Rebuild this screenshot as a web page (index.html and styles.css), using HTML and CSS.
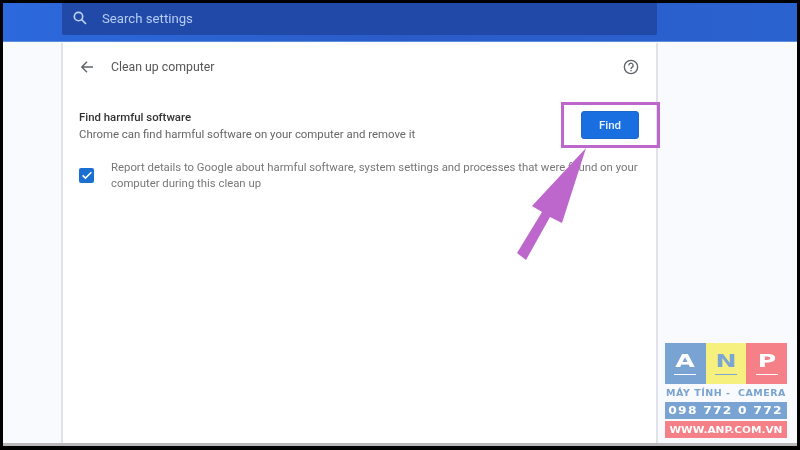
FILE: index.html
```html
<!DOCTYPE html>
<html lang="en">
<head>
  <meta charset="UTF-8" />
  <title>Clean up computer</title>
  <link rel="stylesheet" href="styles.css">
</head>
<body>
  <div class="screen">
    <header class="topbar">
      <div class="search">
        <svg class="search-icon" viewBox="0 0 24 24" width="18" height="18"><circle cx="10" cy="10" r="5.6" fill="none" stroke="currentColor" stroke-width="2.2"/><path d="M14.2 14.2 20 20" stroke="currentColor" stroke-width="2.2" fill="none"/></svg>
        <span>Search settings</span>
      </div>
    </header>

    <main class="content">
      <section class="card">
        <div class="card-head">
          <svg class="back" viewBox="0 0 24 24" width="18" height="18"><path d="M20 12H5M12 5l-7 7 7 7" fill="none" stroke="#5f6368" stroke-width="1.8"/></svg>
          <h1>Clean up computer</h1>
          <svg class="help" viewBox="0 0 24 24" width="16" height="16"><circle cx="12" cy="12" r="10" fill="none" stroke="#5f6368" stroke-width="2"/><path d="M8.8 9.6a3.2 3.2 0 1 1 5 2.6c-1.2.9-1.8 1.4-1.8 2.8" fill="none" stroke="#5f6368" stroke-width="2"/><rect x="11" y="16.4" width="2" height="2" fill="#5f6368"/></svg>
        </div>

        <div class="find-row">
          <div class="find-text">
            <h2>Find harmful software</h2>
            <p>Chrome can find harmful software on your computer and remove it</p>
          </div>
          <div class="find-action">
            <button class="find-btn">Find</button>
          </div>
        </div>

        <div class="report-row">
          <span class="checkbox">
            <svg viewBox="0 0 16 16" width="14" height="14"><path d="M3 8.4l3.2 3.2L13 4.8" fill="none" stroke="#fff" stroke-width="1.7"/></svg>
          </span>
          <p>Report details to Google about harmful software, system settings and processes that were found on your computer during this clean up</p>
        </div>
      </section>

      <aside class="side">
        <div class="logo">
          <div class="tiles">
            <span class="tile tile-a"><b><i>A</i></b></span>
            <span class="tile tile-n"><b><i>N</i></b></span>
            <span class="tile tile-p"><b><i>P</i></b></span>
          </div>
          <div class="logo-caption">MÁY TÍNH -&nbsp; CAMERA</div>
          <div class="logo-phone"><span>098 772 0 772</span></div>
          <div class="logo-web"><span>WWW.ANP.COM.VN</span></div>
        </div>
      </aside>
    </main>

    <!-- annotation drawn over the screenshot -->
    <div class="highlight"></div>
    <svg class="arrow" viewBox="0 0 800 450" width="800" height="450"><polygon points="586,148 532,206 542,212 517,253 526,260 550,217 562,223" fill="#bd67cd"/></svg>
  </div>
</body>
</html>
```

FILE: styles.css
```css
* {
  box-sizing: border-box;
}

html, body {
  margin: 0;
  height: 100%;
}

body {
  background: #000;
  padding: 3px 3px 4px;
  font-family: Roboto, 'Liberation Sans', sans-serif;
  overflow: hidden;
}

/* the filter makes this the containing block of the annotation */
.screen {
  height: 443px;
  display: flex;
  flex-direction: column;
  background: #f8fafe;
  border-bottom: 3px solid #b9b7ba;
  filter: blur(0.35px);
}

.topbar {
  height: 39px;
  flex: none;
  padding-left: 59px;
  padding-right: 140px;
  background: linear-gradient(90deg, #2c69dc, #2a5cc8 50%, #2a62d0);
  border-bottom: 1px solid #5b8fdc;
}

.search {
  height: 32px;
  display: flex;
  align-items: center;
  padding: 0 0 2px 9px;
  gap: 13px;
  background: #2149a8;
  border-radius: 0 0 2px 2px;
  color: #b5cdf3;
  font-size: 13.2px;
}

.search-icon {
  color: #bcd2f5;
}

.content {
  flex: 1;
  display: flex;
  padding-left: 58px;
  padding-top: 1px;
}

.card {
  width: 597px;
  flex: none;
  background: #fff;
  border-left: 2px solid #dfe2e8;
  border-right: 2px solid #dfe2e8;
  padding: 0 17px 0 16px;
}

.card-head {
  height: 47px;
  display: flex;
  align-items: center;
}

.back {
  margin-left: -1px;
  margin-right: 15px;
}

.card-head h1 {
  margin: 0;
  flex: 1;
  font-size: 12.3px;
  font-weight: 400;
  color: #555;
}

.find-row {
  display: flex;
  justify-content: space-between;
  margin-top: 20px;
}

.find-text h2 {
  margin: 0 0 2px;
  font-size: 11.4px;
  line-height: 15px;
  font-weight: 500;
  color: #333;
}

.find-text p {
  margin: 0;
  font-size: 11.4px;
  line-height: 15px;
  color: #666;
}

.find-action {
  margin-top: 1px;
}

.find-btn {
  display: block;
  width: 58px;
  height: 28px;
  border: 1px solid #1c67c8;
  border-radius: 3px;
  background: #1a6fe0;
  color: #e8f1ff;
  font: 500 11.5px Roboto, 'Liberation Sans', sans-serif;
}

.report-row {
  display: flex;
  align-items: center;
  gap: 17px;
  margin-top: 17px;
  margin-right: -4px;
}

.checkbox {
  width: 15px;
  height: 15px;
  flex: none;
  display: flex;
  align-items: center;
  justify-content: center;
  background: #1a6fd0;
  border-radius: 2px;
}

.report-row p {
  margin: 0;
  font-size: 11.35px;
  line-height: 16px;
  color: #777;
}

.side {
  flex: 1;
  display: flex;
  align-items: flex-end;
  padding-left: 7px;
  padding-bottom: 5px;
}

.logo {
  width: 122px;
  font-family: 'DejaVu Sans', sans-serif;
  font-weight: 700;
  text-align: center;
}

.tiles {
  display: flex;
  height: 41px;
}

.tile {
  flex: 1;
  display: flex;
  align-items: center;
  justify-content: center;
  color: #fff;
}

.tile b {
  display: block;
  width: 22px;
  padding-bottom: 5px;
  border-bottom: 1px solid currentColor;
  font-size: 18px;
  line-height: 16px;
}

.tile i {
  display: block;
  font-style: normal;
  transform: scaleX(1.4);
}

.tile-a {
  background: #78a3d2;
}

.tile-n {
  background: #f6f07e;
  color: #7ba6d4;
}

.tile-p {
  background: #f58088;
}

.logo-caption {
  height: 18px;
  line-height: 18px;
  font-size: 9.5px;
  letter-spacing: 0.5px;
  color: #7ba3cf;
  white-space: nowrap;
}

.logo-phone {
  height: 17px;
  line-height: 17px;
  font-size: 10px;
  letter-spacing: 1px;
  background: #78a3d2;
  color: #fff;
  white-space: nowrap;
}

.logo-web {
  height: 17px;
  margin-top: 2px;
  line-height: 17px;
  font-size: 9.5px;
  background: #f58088;
  color: #fff;
  white-space: nowrap;
}

.logo-phone span,
.logo-web span {
  display: inline-block;
}

.logo-phone span {
  transform: scaleX(1.23);
}

.logo-web span {
  transform: scaleX(1.11);
}

.highlight {
  position: absolute;
  left: 558px;
  top: 99px;
  width: 99px;
  height: 46px;
  border: 3px solid #bd67cd;
}

.arrow {
  position: absolute;
  left: -3px;
  top: -3px;
  pointer-events: none;
}
```
